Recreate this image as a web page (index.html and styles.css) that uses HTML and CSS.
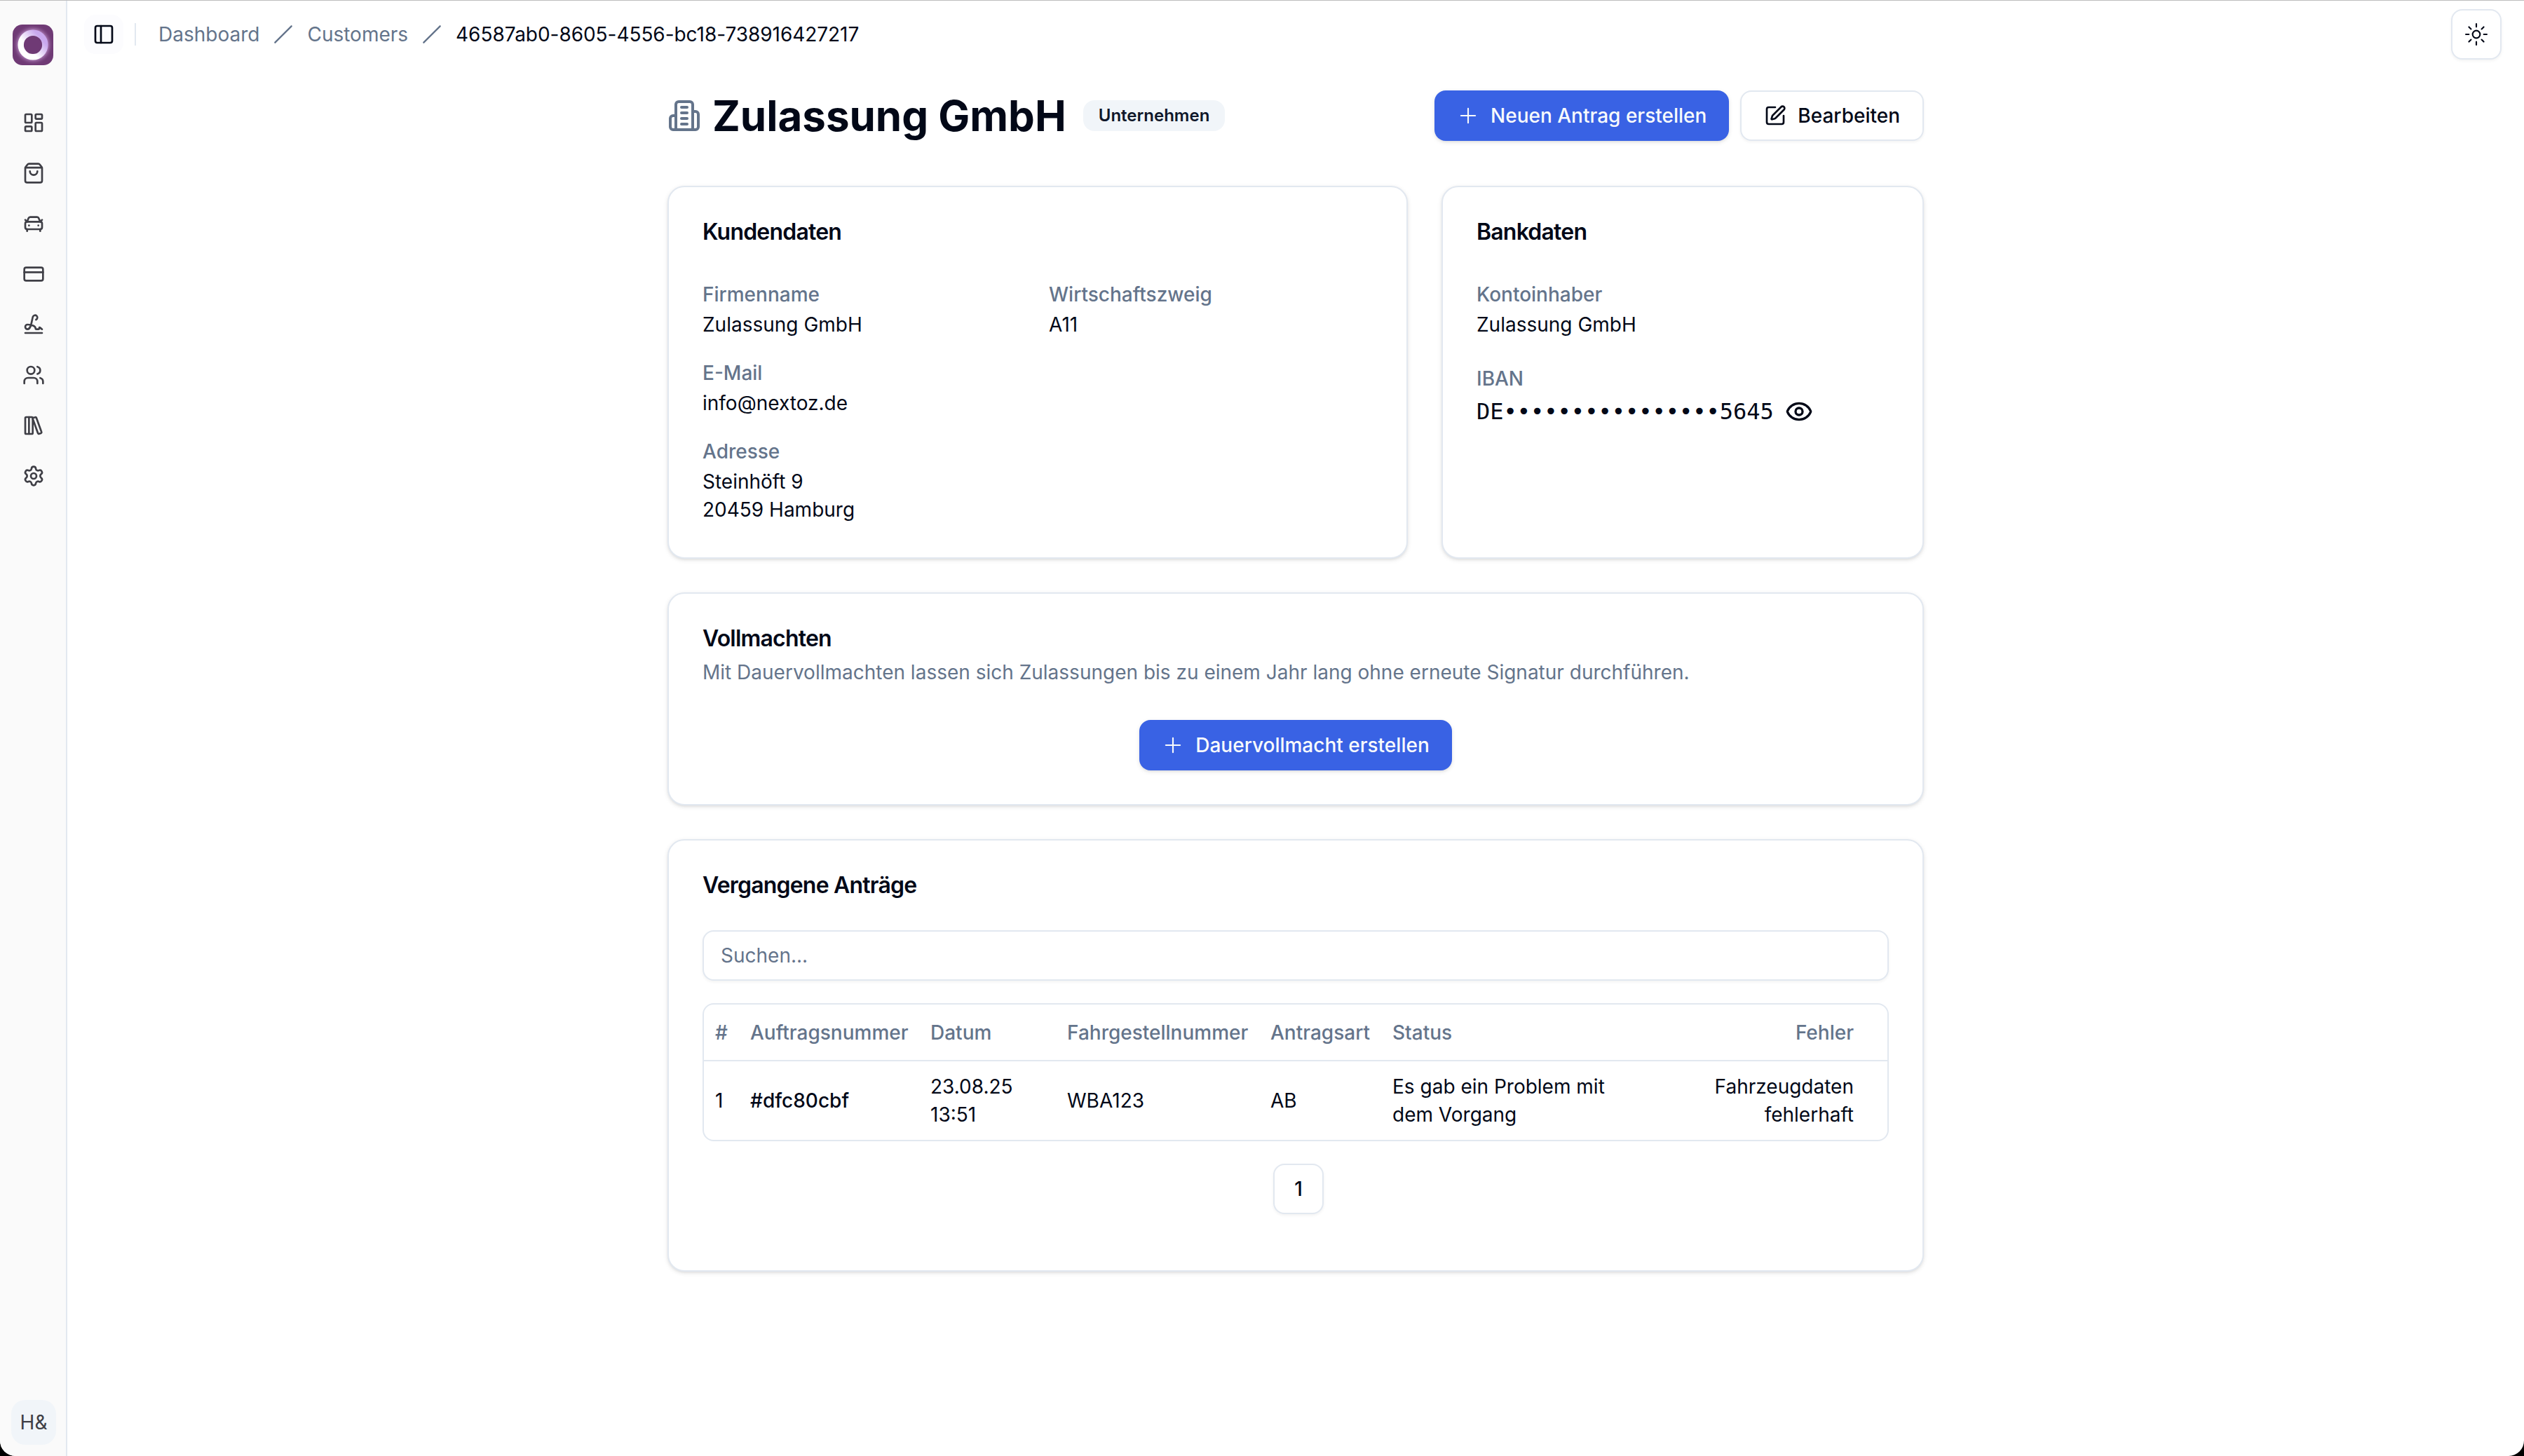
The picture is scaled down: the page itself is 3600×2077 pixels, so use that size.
FILE: index.html
```html
<!DOCTYPE html>
<html lang="de">
<head>
	<meta charset="UTF-8">
	<title>Zulassung GmbH</title>
	<link rel="stylesheet" href="styles.css">
</head>
<body>
	<div class="app">
		<aside class="sidebar">
			<div class="logo">
				<svg viewBox="0 0 58 58">
					<defs>
						<linearGradient id="ring" x1="0.1" y1="0.9" x2="0.85" y2="0.25">
							<stop offset="0.35" stop-color="#fff"/>
							<stop offset="1" stop-color="#c9a8ee"/>
						</linearGradient>
						<radialGradient id="glow">
							<stop offset="0.7" stop-color="#b98bc4"/>
							<stop offset="1" stop-color="#6f3a75" stop-opacity="0"/>
						</radialGradient>
					</defs>
					<circle cx="29" cy="29" r="29" fill="url(#glow)"/>
					<circle cx="29" cy="29" r="15" fill="#6f3a75"/>
					<circle cx="29" cy="29" r="17.3" fill="none" stroke="url(#ring)" stroke-width="8.4"/>
				</svg>
			</div>
			<ul class="menu">
				<li><svg class="icon" viewBox="0 0 24 24"><rect width="7" height="9" x="3" y="3" rx="1"/><rect width="7" height="5" x="14" y="3" rx="1"/><rect width="7" height="9" x="14" y="12" rx="1"/><rect width="7" height="5" x="3" y="16" rx="1"/></svg></li>
				<li><svg class="icon" viewBox="0 0 24 24"><path d="M16 10a4 4 0 0 1-8 0"/><path d="M3.103 6.034h17.794"/><path d="M3.4 5.467a2 2 0 0 0-.4 1.2V20a2 2 0 0 0 2 2h14a2 2 0 0 0 2-2V6.667a2 2 0 0 0-.4-1.2l-2-2.667A2 2 0 0 0 17 2H7a2 2 0 0 0-1.6.8z"/></svg></li>
				<li><svg class="icon" viewBox="0 0 24 24"><path d="m21 8-2 2-1.5-3.7A2 2 0 0 0 15.646 5H8.4a2 2 0 0 0-1.903 1.257L5 10 3 8"/><path d="M7 14h.01"/><path d="M17 14h.01"/><rect width="18" height="8" x="3" y="10" rx="2"/><path d="M5 18v2"/><path d="M19 18v2"/></svg></li>
				<li><svg class="icon" viewBox="0 0 24 24"><rect width="20" height="14" x="2" y="5" rx="2"/><path d="M2 10h20"/></svg></li>
				<li><svg class="icon" viewBox="0 0 24 24"><path d="m21 17-2.156-1.868A.5.5 0 0 0 18 15.5v.5a1 1 0 0 1-1 1h-2a1 1 0 0 1-1-1c0-2.545-3.991-3.97-8.5-4a1 1 0 0 0 0 5c4.153 0 4.745-11.295 5.708-13.5a2.5 2.5 0 1 1 3.31 3.284"/><path d="M3 21h18"/></svg></li>
				<li><svg class="icon" viewBox="0 0 24 24"><path d="M16 21v-2a4 4 0 0 0-4-4H6a4 4 0 0 0-4 4v2"/><circle cx="9" cy="7" r="4"/><path d="M22 21v-2a4 4 0 0 0-3-3.87"/><path d="M16 3.13a4 4 0 0 1 0 7.75"/></svg></li>
				<li><svg class="icon" viewBox="0 0 24 24"><rect width="8" height="18" x="3" y="3" rx="1"/><path d="M7 3v18"/><path d="M20.4 18.9c.2.5-.1 1.1-.6 1.3l-1.9.7c-.5.2-1.1-.1-1.3-.6L11.1 5.1c-.2-.5.1-1.1.6-1.3l1.9-.7c.5-.2 1.1.1 1.3.6Z"/></svg></li>
				<li><svg class="icon" viewBox="0 0 24 24"><path d="M9.671 4.136a2.34 2.34 0 0 1 4.659 0 2.34 2.34 0 0 0 3.319 1.915 2.34 2.34 0 0 1 2.33 4.033 2.34 2.34 0 0 0 0 3.831 2.34 2.34 0 0 1-2.33 4.033 2.34 2.34 0 0 0-3.319 1.915 2.34 2.34 0 0 1-4.659 0 2.34 2.34 0 0 0-3.32-1.915 2.34 2.34 0 0 1-2.33-4.033 2.34 2.34 0 0 0 0-3.831A2.34 2.34 0 0 1 6.35 6.051a2.34 2.34 0 0 0 3.319-1.915"/><circle cx="12" cy="12" r="3"/></svg></li>
			</ul>
			<div class="avatar">H&amp;</div>
		</aside>

		<div class="main">
			<header class="topbar">
				<button class="trigger"><svg class="icon" viewBox="0 0 24 24"><rect width="18" height="18" x="3" y="3" rx="2"/><path d="M9 3v18"/></svg></button>
				<div class="divider"></div>
				<nav class="breadcrumb">
					<a>Dashboard</a>
					<svg class="icon slash" viewBox="0 0 24 24"><path d="M22 2 2 22"/></svg>
					<a>Customers</a>
					<svg class="icon slash" viewBox="0 0 24 24"><path d="M22 2 2 22"/></svg>
					<span class="current">46587ab0-8605-4556-bc18-738916427217</span>
				</nav>
				<button class="btn btn-icon theme"><svg class="icon icon-thin" viewBox="0 0 15 15"><circle cx="7.5" cy="7.5" r="2.5"/><path d="M7.5.5v2M7.5 12.5v2M.5 7.5h2M12.5 7.5h2M2.55 2.55l1.41 1.41M11.04 11.04l1.41 1.41M2.55 12.45l1.41-1.41M11.04 3.96l1.41-1.41"/></svg></button>
			</header>

			<div class="content">
				<div class="title-row">
					<svg class="icon building" viewBox="0 0 24 24"><path d="M6 22V4a2 2 0 0 1 2-2h8a2 2 0 0 1 2 2v18Z"/><path d="M6 12H4a2 2 0 0 0-2 2v6a2 2 0 0 0 2 2h2"/><path d="M18 9h2a2 2 0 0 1 2 2v9a2 2 0 0 1-2 2h-2"/><path d="M10 6h4"/><path d="M10 10h4"/><path d="M10 14h4"/><path d="M10 18h4"/></svg>
					<h1>Zulassung GmbH</h1>
					<span class="badge">Unternehmen</span>
					<div class="actions">
						<button class="btn btn-primary"><svg class="icon icon-thin" viewBox="0 0 15 15"><path d="M7.5 2.75v9.5M2.75 7.5h9.5"/></svg>Neuen Antrag erstellen</button>
						<button class="btn"><svg class="icon" viewBox="0 0 24 24"><path d="M12 3H5a2 2 0 0 0-2 2v14a2 2 0 0 0 2 2h14a2 2 0 0 0 2-2v-7"/><path d="M18.375 2.625a1 1 0 0 1 3 3l-9.013 9.014a2 2 0 0 1-.853.505l-2.873.84a.5.5 0 0 1-.62-.62l.84-2.873a2 2 0 0 1 .506-.852z"/></svg>Bearbeiten</button>
					</div>
				</div>

				<div class="cards">
					<section class="card customer">
						<h2>Kundendaten</h2>
						<div class="card-body fields">
							<div>
								<div class="label"><span>Firmenname</span></div>
								<p>Zulassung GmbH</p>
							</div>
							<div>
								<div class="label"><span>Wirtschaftszweig</span></div>
								<p>A11</p>
							</div>
							<div class="wide">
								<div class="label"><span>E-Mail</span></div>
								<p>info@nextoz.de</p>
							</div>
							<div class="wide">
								<div class="label"><span>Adresse</span></div>
								<p>Steinhöft 9</p>
								<p>20459 Hamburg</p>
							</div>
						</div>
					</section>

					<section class="card bank">
						<h2>Bankdaten</h2>
						<div class="card-body bank-fields">
							<div>
								<div class="label"><span>Kontoinhaber</span></div>
								<p>Zulassung GmbH</p>
							</div>
							<div>
								<div class="label"><span>IBAN</span></div>
								<div class="iban">
									<span>DE••••••••••••••••5645</span>
									<svg class="icon eye" viewBox="0 0 24 24"><path d="M2.062 12.348a1 1 0 0 1 0-.696 10.75 10.75 0 0 1 19.876 0 1 1 0 0 1 0 .696 10.75 10.75 0 0 1-19.876 0"/><circle cx="12" cy="12" r="3"/></svg>
								</div>
							</div>
						</div>
					</section>

					<section class="card full">
						<h2>Vollmachten</h2>
						<p class="description">Mit Dauervollmachten lassen sich Zulassungen bis zu einem Jahr lang ohne erneute Signatur durchführen.</p>
						<div class="card-body center">
							<button class="btn btn-primary"><svg class="icon icon-thin" viewBox="0 0 15 15"><path d="M7.5 2.75v9.5M2.75 7.5h9.5"/></svg>Dauervollmacht erstellen</button>
						</div>
					</section>

					<section class="card full">
						<h2>Vergangene Anträge</h2>
						<div class="card-body">
							<input class="search" type="text" placeholder="Suchen...">
							<div class="table-wrap">
								<table>
									<colgroup>
										<col class="c-nr"><col class="c-order"><col class="c-date"><col class="c-vin"><col class="c-type"><col class="c-status"><col>
									</colgroup>
									<thead>
										<tr>
											<th>#</th>
											<th>Auftragsnummer</th>
											<th>Datum</th>
											<th>Fahrgestellnummer</th>
											<th>Antragsart</th>
											<th>Status</th>
											<th class="right">Fehler</th>
										</tr>
									</thead>
									<tbody>
										<tr>
											<td>1</td>
											<td class="order">#dfc80cbf</td>
											<td>23.08.25<br>13:51</td>
											<td>WBA123</td>
											<td>AB</td>
											<td>Es gab ein Problem mit dem Vorgang</td>
											<td class="right">Fahrzeugdaten fehlerhaft</td>
										</tr>
									</tbody>
								</table>
							</div>
							<div class="pagination">
								<button class="btn btn-icon">1</button>
							</div>
						</div>
					</section>
				</div>
			</div>
		</div>
	</div>
</body>
</html>
```
FILE: styles.css
```css
*{box-sizing:border-box;}
html{background:#000;}
body{margin:0;font-family:Inter,"Liberation Sans",sans-serif;font-size:28px;line-height:40px;color:#020817;}
h1,h2,p,ul{margin:0;padding:0;font-weight:400;}
ul{list-style:none;}
button{font:inherit;color:inherit;}

.app{display:flex;height:2077px;background:#fff;border-top:1px solid #bdbdbd;border-radius:0 0 22px 22px;overflow:hidden;}
.icon{display:block;flex:none;width:32px;height:32px;fill:none;stroke:currentColor;stroke-width:2;stroke-linecap:round;stroke-linejoin:round;}
.icon-thin{stroke-width:1;}

/* sidebar */
.sidebar{display:flex;flex-direction:column;flex:none;width:96px;padding:34px 14px 16px 16px;background:#fafafa;border-right:2px solid #e2e8f0;color:#3f3f46;}
.logo{width:58px;height:58px;margin:0 0 50px 2px;border-radius:14px;background:#6f3a75;overflow:hidden;}
.logo svg{display:block;}
.menu{display:flex;flex-direction:column;gap:8px;flex:1;}
.menu li{display:flex;align-items:center;justify-content:center;width:64px;height:64px;}
.avatar{width:64px;height:64px;border-radius:20px;background:#f1f5f9;line-height:64px;text-align:center;}

/* top bar */
.main{flex:1;}
.topbar{display:flex;align-items:center;height:96px;padding:0 32px 0 24px;}
.trigger{display:flex;align-items:center;justify-content:center;width:56px;height:56px;padding:0;border:0;border-radius:16px;background:#fcfcfe;}
.divider{width:2px;height:32px;margin:0 32px 0 16px;background:#e2e8f0;}
.breadcrumb{display:flex;align-items:center;gap:20px;color:#64748b;}
.breadcrumb .current{color:#020817;letter-spacing:-.05px;}
.slash{width:28px;height:28px;}
.theme{margin-left:auto;}

.btn{display:inline-flex;align-items:center;justify-content:center;gap:16px;height:72px;padding:0 32px;border:2px solid #e2e8f0;border-radius:16px;background:#fff;font-weight:500;white-space:nowrap;box-shadow:0 2px 4px rgba(0,0,0,.05);}
.btn-primary{border:0;background:#3962e4;color:#f8fafc;box-shadow:0 2px 6px rgba(0,0,0,.1),0 2px 4px -2px rgba(0,0,0,.1);}
.btn-icon{width:72px;padding:0;}

/* page */
.content{width:1792px;margin:32px auto 0;}
.title-row{display:flex;align-items:center;height:72px;margin-bottom:64px;}
.building{width:48px;height:48px;margin-right:16px;color:#64748b;}
.title-row h1{font-size:60px;line-height:72px;font-weight:700;}
.badge{height:44px;margin-left:24px;padding:0 22px;border-radius:16px;background:#f1f5f9;color:#0f172a;font-size:24px;line-height:44px;font-weight:600;}
.actions{display:flex;gap:16px;margin-left:auto;}

.cards{display:grid;grid-template-columns:repeat(5,1fr);gap:48px;}
.card{padding:48px;border:2px solid #e2e8f0;border-radius:24px;background:#fff;box-shadow:0 2px 6px rgba(0,0,0,.1),0 2px 4px -2px rgba(0,0,0,.1);}
.card h2{font-size:32px;line-height:32px;font-weight:600;letter-spacing:-.025em;}
.card-body{margin-top:48px;}
.customer{grid-column:span 3;}
.bank{grid-column:span 2;}
.full{grid-column:span 5;}
.description{margin-top:12px;color:#64748b;}
.center{display:flex;justify-content:center;}

.fields{display:grid;grid-template-columns:1fr 1fr;gap:24px 32px;}
.fields .wide{grid-column:span 2;}
.bank-fields{display:grid;gap:32px;}
.label{font-size:32px;line-height:48px;height:48px;}
.label span{font-size:28px;font-weight:500;color:#64748b;}
.iban{display:flex;align-items:center;gap:16px;font-family:"DejaVu Sans Mono",monospace;font-size:32px;line-height:48px;}
.eye{width:40px;height:40px;}

/* table */
.search{display:block;width:100%;height:72px;padding:0 24px;border:2px solid #e2e8f0;border-radius:16px;background:#fff;font:inherit;box-shadow:0 2px 4px rgba(0,0,0,.05);}
.search::placeholder{color:#64748b;opacity:1;}
.table-wrap{margin-top:32px;border:2px solid #e2e8f0;border-radius:16px;overflow:hidden;}
table{width:100%;table-layout:fixed;border-spacing:0;}
th,td{padding:0 16px;text-align:left;}
th{height:81px;border-bottom:2px solid #e2e8f0;font-weight:500;color:#64748b;white-space:nowrap;}
td{height:112px;}
.order{font-weight:500;}
.right{padding-right:48px;text-align:right;}
.c-nr{width:50px;}
.c-order{width:257px;}
.c-date{width:195px;}
.c-vin{width:290px;}
.c-type{width:174px;}
.c-status{width:350px;}
.pagination{display:flex;justify-content:center;padding:32px 0 32px 8px;}
```
